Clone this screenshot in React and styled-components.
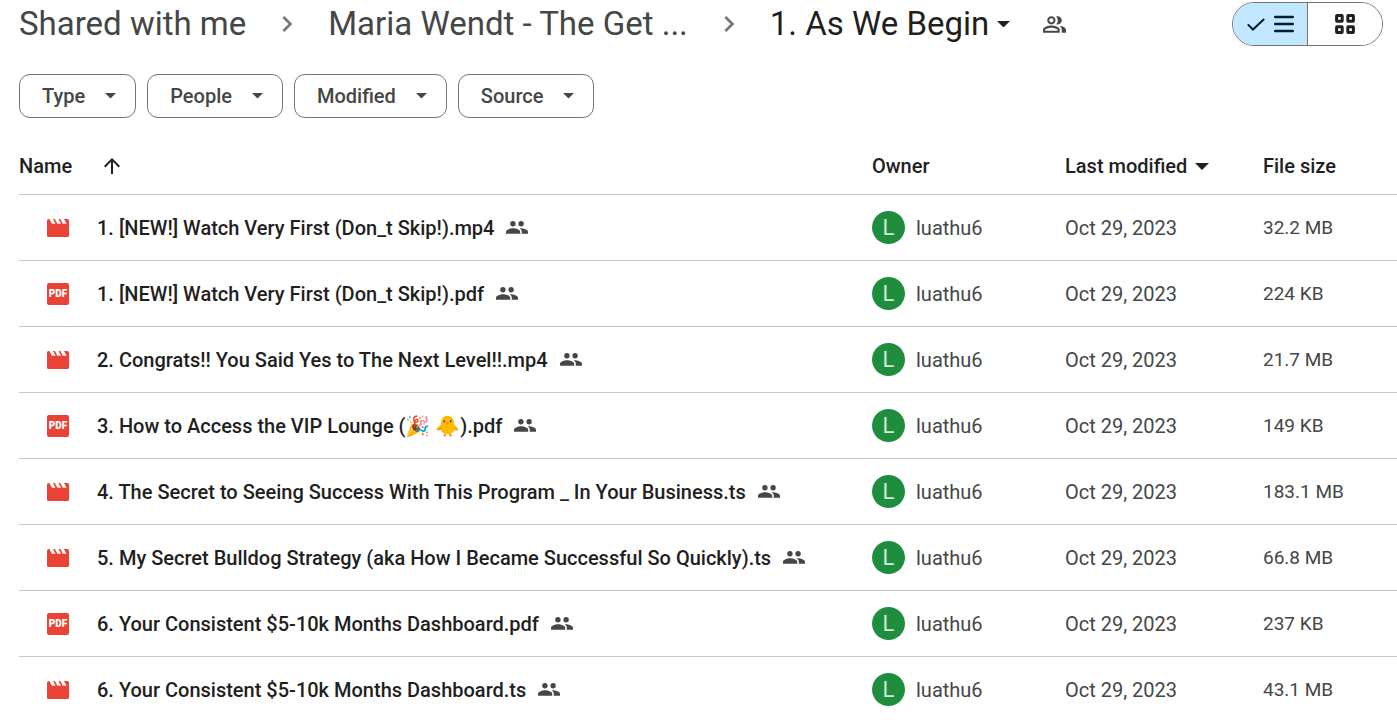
import React, { useState } from "react";
import styled, { createGlobalStyle } from "styled-components";
import {
  MdArrowUpward,
  MdChevronRight,
  MdOutlinePeopleAlt
} from "react-icons/md";

const filters = ["Type", "People", "Modified", "Source"];

const files = [
  { kind: "video", name: "1. [NEW!] Watch Very First (Don_t Skip!).mp4", size: "32.2 MB" },
  { kind: "pdf", name: "1. [NEW!] Watch Very First (Don_t Skip!).pdf", size: "224 KB" },
  { kind: "video", name: "2. Congrats!! You Said Yes to The Next Level!!.mp4", size: "21.7 MB" },
  { kind: "pdf", name: "3. How to Access the VIP Lounge (🎉 🐥).pdf", size: "149 KB" },
  { kind: "video", name: "4. The Secret to Seeing Success With This Program _ In Your Business.ts", size: "183.1 MB" },
  { kind: "video", name: "5. My Secret Bulldog Strategy (aka How I Became Successful So Quickly).ts", size: "66.8 MB" },
  { kind: "pdf", name: "6. Your Consistent $5-10k Months Dashboard.pdf", size: "237 KB" },
  { kind: "video", name: "6. Your Consistent $5-10k Months Dashboard.ts", size: "43.1 MB" }
];

function Caret({ width = 11 }) {
  return (
    <svg width={width} viewBox="0 0 10 5" fill="currentColor" aria-hidden="true">
      <path d="M0 0h10L5 5z" />
    </svg>
  );
}

function VideoIcon() {
  return (
    <svg width="22" height="18" viewBox="0 0 22 18" aria-hidden="true">
      <rect width="22" height="18" rx="1.6" fill="#ea4335" />
      <path
        d="M2.4 0h3.6l2.5 4.8H4.9zM7.9 0h3.6l2.5 4.8h-3.6zM13.4 0h3.6l2.5 4.8h-3.6z"
        fill="#fff"
      />
    </svg>
  );
}

function SharedIcon() {
  return (
    <svg width="22" height="13" viewBox="0 0 22 13" fill="#444746" aria-label="Shared">
      <circle cx="6.9" cy="2.7" r="2.7" />
      <circle cx="15.1" cy="2.7" r="2.7" />
      <path d="M0 12.8v-1.9C0 8.6 4.6 7.3 7.1 7.3s7.1 1.3 7.1 3.6v1.9z" />
      <path d="M13.6 7.3c3.2-.2 8.4 1.1 8.4 3.6v1.9h-6.2v-2c0-1.5-.8-2.6-2.2-3.5z" />
    </svg>
  );
}

function FileRow({ file }) {
  return (
    <tr>
      <Cell>
        <FileName>
          {file.kind === "video" ? <VideoIcon /> : <PdfIcon>PDF</PdfIcon>}
          <NameText>
            {file.name}
            <SharedIcon />
          </NameText>
        </FileName>
      </Cell>
      <Cell>
        <Owner>
          <Avatar>L</Avatar>
          luathu6
        </Owner>
      </Cell>
      <Cell>Oct 29, 2023</Cell>
      <SizeCell>{file.size}</SizeCell>
    </tr>
  );
}

function App() {
  const [view, setView] = useState("list");

  return (
    <Page>
      <GlobalStyle />
      <TopBar>
        <Breadcrumbs aria-label="Folder path">
          <Crumb href="#shared">Shared with me</Crumb>
          <MdChevronRight size={32} />
          <Crumb href="#parent">Maria Wendt - The Get ...</Crumb>
          <MdChevronRight size={32} />
          <CurrentFolder>
            1. As We Begin
            <Caret width={13} />
          </CurrentFolder>
        </Breadcrumbs>
        <ShareButton aria-label="Manage access">
          <MdOutlinePeopleAlt size={25} />
        </ShareButton>
        <ViewToggle>
          <ViewButton
            active={view === "list" ? 1 : 0}
            aria-label="List layout"
            onClick={() => setView("list")}
          >
            <svg width="18" height="13" viewBox="0 0 18 13" fill="none" stroke="currentColor" strokeWidth="2">
              <path d="M.8 6.4l5.1 5.1L17.2.9" />
            </svg>
            <svg width="20" height="18" viewBox="0 0 20 18" stroke="currentColor" strokeWidth="2.6" strokeLinecap="round">
              <path d="M1.3 2h17.4M1.3 9h17.4M1.3 16h17.4" />
            </svg>
          </ViewButton>
          <ViewButton
            active={view === "grid" ? 1 : 0}
            aria-label="Grid layout"
            onClick={() => setView("grid")}
          >
            <svg width="20" height="20" viewBox="0 0 20 20" fill="none" stroke="currentColor" strokeWidth="3">
              <rect x="1.6" y="1.6" width="5.6" height="5.6" rx=".4" />
              <rect x="12.8" y="1.6" width="5.6" height="5.6" rx=".4" />
              <rect x="1.6" y="12.8" width="5.6" height="5.6" rx=".4" />
              <rect x="12.8" y="12.8" width="5.6" height="5.6" rx=".4" />
            </svg>
          </ViewButton>
        </ViewToggle>
      </TopBar>
      <Filters>
        {filters.map(filter => (
          <Chip key={filter}>
            {filter}
            <Caret />
          </Chip>
        ))}
      </Filters>
      <Table>
        <thead>
          <tr>
            <HeaderCell>
              <SortButton gap={28}>
                Name
                <MdArrowUpward size={24} />
              </SortButton>
            </HeaderCell>
            <HeaderCell width={193}>Owner</HeaderCell>
            <HeaderCell width={198}>
              <SortButton gap={8}>
                Last modified
                <Caret width={14} />
              </SortButton>
            </HeaderCell>
            <HeaderCell width={134}>File size</HeaderCell>
          </tr>
        </thead>
        <tbody>
          {files.map(file => (
            <FileRow key={file.name} file={file} />
          ))}
        </tbody>
      </Table>
    </Page>
  );
}

const GlobalStyle = createGlobalStyle`
  * {
    box-sizing: border-box;
  }

  body {
    margin: 0;
    background-color: #fff;
    color: #444746;
    font-family: "Google Sans", Roboto, "Noto Color Emoji", sans-serif;
    font-size: 20px;
  }

  button {
    padding: 0;
    border: none;
    background: none;
    color: inherit;
    font: inherit;
    cursor: pointer;
  }

  svg {
    flex-shrink: 0;
  }
`;

const Page = styled.main`
  height: 100vh;
  overflow: hidden;
  padding: 2px 0 0 19px;
`;

const TopBar = styled.header`
  display: flex;
  align-items: center;
  height: 44px;
  padding-right: 14px;
`;

const Breadcrumbs = styled.nav`
  display: flex;
  align-items: center;
  gap: 25px;
  font-size: 33px;
  line-height: 44px;
  white-space: nowrap;

  > svg {
    color: #747775;
  }
`;

const Crumb = styled.a`
  color: #444746;
  text-decoration: none;
`;

const CurrentFolder = styled.button`
  display: flex;
  align-items: center;
  gap: 8px;
  color: #1f1f1f;
`;

const ShareButton = styled.button`
  display: flex;
  margin-left: 32px;
`;

const ViewToggle = styled.div`
  display: flex;
  width: 151px;
  height: 44px;
  margin-left: auto;
  border: 1px solid #747775;
  border-radius: 22px;
  overflow: hidden;
`;

const ViewButton = styled.button`
  flex: 1;
  display: flex;
  align-items: center;
  justify-content: center;
  gap: 9px;
  background-color: ${({ active }) => (active ? "#c2e7ff" : "#fff")};
  color: ${({ active }) => (active ? "#001d35" : "#1f1f1f")};

  & + & {
    border-left: 1px solid #747775;
  }
`;

const Filters = styled.div`
  display: flex;
  gap: 11px;
  margin-top: 28px;
`;

const Chip = styled.button`
  && {
    display: flex;
    align-items: center;
    gap: 20px;
    height: 44px;
    padding: 0 19px 0 22px;
    border: 1px solid #747775;
    border-radius: 11px;
    font-weight: 500;
  }
`;

const Table = styled.table`
  width: 100%;
  margin-top: 20px;
  border-collapse: separate;
  border-spacing: 0;
  table-layout: fixed;
`;

const HeaderCell = styled.th`
  width: ${({ width }) => (width ? `${width}px` : "auto")};
  height: 57px;
  padding: 0;
  border-bottom: 1px solid #c7c7c7;
  color: #1f1f1f;
  font-weight: 500;
  text-align: left;
`;

const SortButton = styled.button`
  display: flex;
  align-items: center;
  gap: ${({ gap }) => gap}px;
`;

const Cell = styled.td`
  height: 66px;
  padding: 0;
  border-bottom: 1px solid #c7c7c7;
  white-space: nowrap;
`;

const SizeCell = styled(Cell)`
  font-size: 19px;
`;

const FileName = styled.div`
  display: flex;
  align-items: center;
  gap: 28px;
  padding-left: 28px;
`;

const NameText = styled.span`
  display: flex;
  align-items: center;
  gap: 12px;
  color: #1f1f1f;
  font-weight: 500;
`;

const PdfIcon = styled.span`
  width: 22px;
  height: 22px;
  border-radius: 2px;
  background-color: #ea4335;
  color: #fff;
  font-size: 10px;
  font-weight: 900;
  line-height: 22px;
  text-align: center;
`;

const Owner = styled.div`
  display: flex;
  align-items: center;
  gap: 11px;
`;

const Avatar = styled.span`
  width: 33px;
  height: 33px;
  border-radius: 50%;
  background-color: #1e8e3e;
  color: #d2e8d8;
  font-size: 22px;
  line-height: 33px;
  text-align: center;
`;

export default App;
